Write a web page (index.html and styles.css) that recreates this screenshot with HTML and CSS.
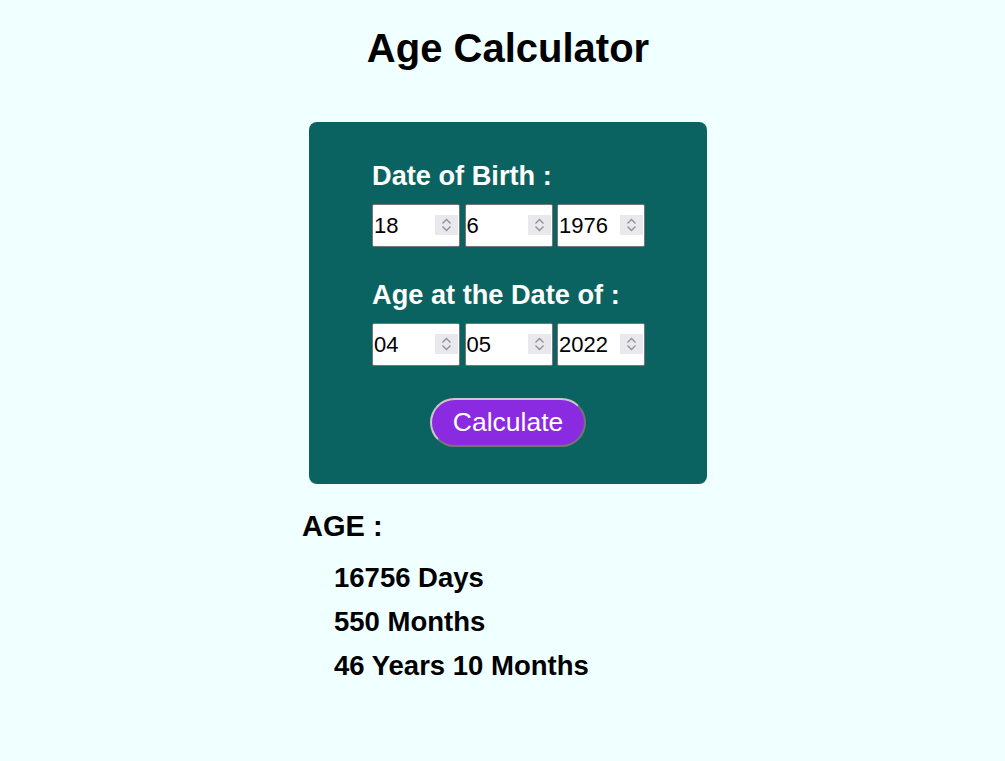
FILE: index.html
```html
<!DOCTYPE html>
<html>
<head>
<meta charset="utf-8">
<link rel="stylesheet" href="styles.css">
</head>
<body>
<div class="page">
  <h1 class="title">Age Calculator</h1>
  <div class="card">
    <div class="group">
      <label class="label">Date of Birth :</label>
      <div class="inputs">
        <span class="field"><input class="num" type="number" value="18"><span class="spin"><svg width="23" height="20" viewBox="0 0 23 20"><path d="M7.5 8.5 L11.5 4.5 L15.5 8.5 M7.5 11.5 L11.5 15.5 L15.5 11.5" fill="none" stroke="#8f8f95" stroke-width="1.3"/></svg></span></span>
        <span class="field"><input class="num" type="number" value="6"><span class="spin"><svg width="23" height="20" viewBox="0 0 23 20"><path d="M7.5 8.5 L11.5 4.5 L15.5 8.5 M7.5 11.5 L11.5 15.5 L15.5 11.5" fill="none" stroke="#8f8f95" stroke-width="1.3"/></svg></span></span>
        <span class="field"><input class="num" type="number" value="1976"><span class="spin"><svg width="23" height="20" viewBox="0 0 23 20"><path d="M7.5 8.5 L11.5 4.5 L15.5 8.5 M7.5 11.5 L11.5 15.5 L15.5 11.5" fill="none" stroke="#8f8f95" stroke-width="1.3"/></svg></span></span>
      </div>
    </div>
    <div class="group">
      <label class="label">Age at the Date of :</label>
      <div class="inputs">
        <span class="field"><input class="num" type="number" value="04"><span class="spin"><svg width="23" height="20" viewBox="0 0 23 20"><path d="M7.5 8.5 L11.5 4.5 L15.5 8.5 M7.5 11.5 L11.5 15.5 L15.5 11.5" fill="none" stroke="#8f8f95" stroke-width="1.3"/></svg></span></span>
        <span class="field"><input class="num" type="number" value="05"><span class="spin"><svg width="23" height="20" viewBox="0 0 23 20"><path d="M7.5 8.5 L11.5 4.5 L15.5 8.5 M7.5 11.5 L11.5 15.5 L15.5 11.5" fill="none" stroke="#8f8f95" stroke-width="1.3"/></svg></span></span>
        <span class="field"><input class="num" type="number" value="2022"><span class="spin"><svg width="23" height="20" viewBox="0 0 23 20"><path d="M7.5 8.5 L11.5 4.5 L15.5 8.5 M7.5 11.5 L11.5 15.5 L15.5 11.5" fill="none" stroke="#8f8f95" stroke-width="1.3"/></svg></span></span>
      </div>
    </div>
    <div class="actions">
      <button class="calc" type="button">Calculate</button>
    </div>
  </div>
  <div class="result">
    <h2 class="age-title">AGE :</h2>
    <p class="line">16756 Days</p>
    <p class="line">550 Months</p>
    <p class="line">46 Years 10 Months</p>
  </div>
</div>
</body>
</html>
```
FILE: styles.css
```css
html, body {
  margin: 0;
  padding: 0;
  background: #f0ffff;
  font-family: "Liberation Sans", Arial, sans-serif;
}
.page {
  width: 398px;
  margin: 0 auto;
  padding-left: 11px;
  padding-top: 26px;
}
.title {
  margin: 0 -100px;
  text-align: center;
  font-size: 40px;
  font-weight: bold;
  color: #000;
}
.card {
  margin-top: 51px;
  background: #0b6361;
  border-radius: 8px;
  padding: 38px 0 37px 63px;
  display: flex;
  flex-direction: column;
  gap: 32px;
}
.group {
  display: flex;
  flex-direction: column;
  gap: 12px;
}
.label {
  color: #fff;
  font-size: 27.2px;
  font-weight: bold;
}
.inputs {
  display: flex;
  gap: 4.5px;
}
.field {
  position: relative;
  display: block;
  width: 88px;
  height: 43px;
}
.num {
  box-sizing: border-box;
  width: 88px;
  height: 43px;
  margin: 0;
  padding: 1px 26px 1px 1px;
  font-family: "Liberation Sans", Arial, sans-serif;
  font-size: 22px;
  color: #000;
  background: #fff;
  border: 1px solid #767676;
  border-radius: 2px;
  -moz-appearance: textfield;
  appearance: textfield;
}
.num::-webkit-inner-spin-button,
.num::-webkit-outer-spin-button {
  -webkit-appearance: none;
  margin: 0;
}
.spin {
  position: absolute;
  right: 2px;
  top: 11px;
  width: 23px;
  height: 20px;
  background: #e9e9ed;
  display: block;
}
.spin svg {
  display: block;
}
.actions {
  display: flex;
  padding-left: 58px;
}
.calc {
  box-sizing: border-box;
  width: 156px;
  height: 49px;
  background: #8a2be2;
  color: #fff;
  font-family: "Liberation Sans", Arial, sans-serif;
  font-size: 26.5px;
  border: 2px outset #c8c8c8;
  border-radius: 25px;
  padding: 0;
}
.result {
  margin-left: -7px;
  margin-top: 26px;
}
.age-title {
  margin: 0;
  font-size: 29px;
  font-weight: bold;
}
.line {
  margin: 19px 0 0 32px;
  font-size: 27.5px;
  font-weight: bold;
}
.line + .line {
  margin-top: 12px;
}
```
